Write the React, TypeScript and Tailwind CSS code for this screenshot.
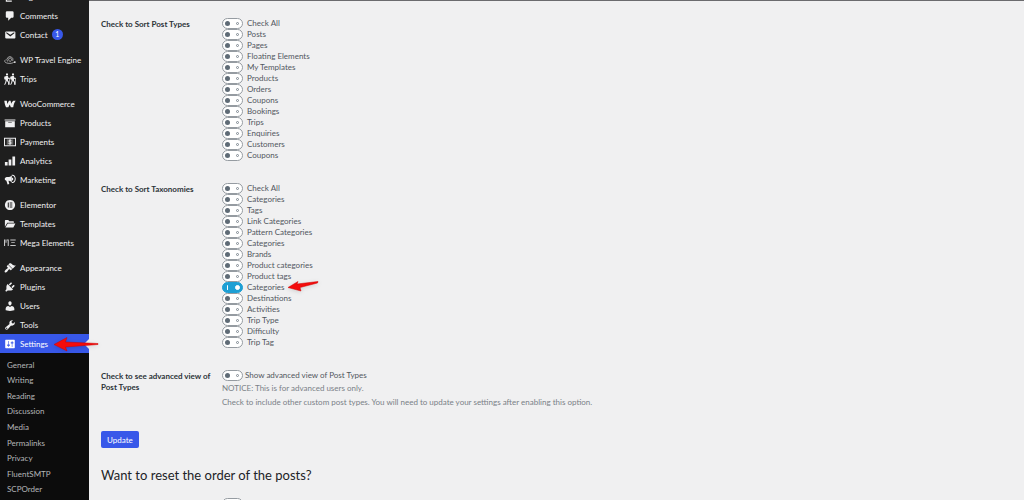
import React, { useState } from 'react';

interface MenuItem {
  name: string;
  icon: React.ReactNode;
  badge?: number;
  gap?: boolean;
  active?: boolean;
}

const Icon: React.FC<{ d?: string; children?: React.ReactNode }> = ({ d, children }) => (
  <svg viewBox="0 0 20 20" className="h-3 w-3 shrink-0" fill="currentColor" aria-hidden="true">
    {d ? <path d={d} /> : children}
  </svg>
);

const hiker = 'M5 0.5a1.8 1.8 0 1 0 .01 0zM3.6 5h2.8l1.4 3.2 1.6.8v1.4L6.8 9.6 6.6 12l1.8 3v4.6H6.8V16L4.6 13 3.4 16.6 1.6 19.8.4 19 2 15.8l.8-4.4L.4 10.6V6.2zM8.8 8h1v11.6h-1z';

const menu: MenuItem[] = [
  { name: 'Pages', icon: <Icon d="M6 15V2h10v13H6zm-1 1h8v2H3V5h2v11z" /> },
  { name: 'Comments', icon: <Icon d="M5 2h9q.82 0 1.41.59T16 4v7q0 .82-.59 1.41T14 13h-2l-5 5v-5H5q-.82 0-1.41-.59T3 11V4q0-.82.59-1.41T5 2z" /> },
  { name: 'Contact', badge: 1, icon: <Icon d="M3.87 4h13.25C18.37 4 19 4.59 19 5.79v8.42c0 1.19-.63 1.79-1.88 1.79H3.87c-1.25 0-1.88-.6-1.88-1.79V5.79c0-1.2.63-1.79 1.88-1.79zm6.62 8.6l6.74-5.53c.24-.2.43-.66.13-1.07-.29-.41-.82-.42-1.17-.17l-5.7 3.86L4.8 5.83c-.35-.25-.88-.24-1.17.17-.3.41-.11.87.13 1.07z" /> },
  {
    name: 'WP Travel Engine',
    gap: true,
    icon: (
      <Icon>
        <g fill="none" stroke="currentColor" strokeWidth="1.3" opacity="0.8">
          <path d="M6 12.5A5 5 0 1 1 14.500 11.5" />
          <path d="M8 10.300a2.500 2.500 0 1 1 4.300 0L10.200 12.800z" />
          <path d="M2.500 9.500C-1 13 3 15.800 10 15.600c3 0 5-.8 6.500-2" />
        </g>
        <circle cx="18" cy="13.500" r="1.600" />
      </Icon>
    ),
  },
  {
    name: 'Trips',
    icon: (
      <Icon>
        <path d={hiker} />
        <path d={hiker} transform="translate(10 0)" />
      </Icon>
    ),
  },
  { name: 'WooCommerce', gap: true, icon: <Icon d="M.5 4.500h4.200l.8 5.500L8.300 4.500h2.800l.8 5C12.800 7.500 14 5.700 15.500 4.500h4c-2.200 2.500-3.400 6.100-4.100 11h-4l-1.900-4.600L7.300 15.500H3.400C1.800 12 1 9 .5 4.500z" /> },
  { name: 'Products', icon: <Icon d="M19 4v2H1V4h18zM2 7h16v10H2V7zm11 3V9H7v1h6z" /> },
  {
    name: 'Payments',
    icon: (
      <Icon>
        <path fillRule="evenodd" d="M0 3h20v14H0zM1.700 4.700v10.600h16.600V4.700z" />
        <path d="M4.500 5.500h11v9h-11z" opacity="0.35" />
        <path d="M12.300 7.700c-1-1-4.300-1-4.300.7 0 2.100 4.100 1 4.100 3.300 0 1.900-3.300 1.700-4.600.6M10 5.500v9" fill="none" stroke="currentColor" strokeWidth="1.600" />
      </Icon>
    ),
  },
  { name: 'Analytics', icon: <Icon d="M1.500 11.500h4.500V17.500H1.500zM7.700 7.500h4.500v10H7.700zM14 2.500h4.500v15H14z" /> },
  {
    name: 'Marketing',
    icon: (
      <Icon>
        <path d="M13 2.500v11.500c-2-2-3.800-2.600-5.500-2.700l1.300 5.500-2.800.8-2-6.500C1.500 10.500.8 8.800 1.500 7.200 2.200 5.700 4 5.300 6.500 5.200 9 5.100 11 4.300 13 2.500z" />
        <path d="M13 2.200c3.500-1 5.700 2.300 5.700 5.900s-2.200 6.800-5.700 6" fill="none" stroke="currentColor" strokeWidth="1.700" />
        <path d="M13 5.700a2.500 2.500 0 0 1 0 5z" />
      </Icon>
    ),
  },
  { name: 'Elementor', gap: true, icon: <Icon><path fillRule="evenodd" d="M10 1.500a8.500 8.500 0 1 0 .01 0zM6.300 6H8v8H6.300zM9.500 6h4.400v1.600H9.500zM9.500 9.200h4.400v1.600H9.500zM9.500 12.400h4.400V14H9.500z" /></Icon> },
  { name: 'Templates', icon: <Icon d="M1.500 4.500c0-.6.400-1 1-1h4.500l2 2h6.500c.6 0 1 .4 1 1V8H5.500L1.500 14.500zM6.200 9H19l-3.200 6.500c-.2.400-.5.500-.8.500H2.300z" /> },
  {
    name: 'Mega Elements',
    icon: (
      <Icon>
        <path d="M0 4h1.800v11H0zM2.600 4h1.600v5.500H2.600zM5 4h3v11H6.200V5.800H5zM10.500 4h9v1.700h-9zM12 8.600h6v1.600h-6zM10.500 13.300h9V15h-9z" opacity="0.8" />
      </Icon>
    ),
  },
  { name: 'Appearance', gap: true, icon: <Icon d="M14.48 11.06L7.41 3.99l1.5-1.5c.5-.56 2.3-.47 3.51.32 1.21.8 1.43 1.28 2.91 2.1 1.18.64 2.45 1.26 4.45.85zm-.71.71L6.7 4.7 4.93 6.47c-.39.39-.39 1.02 0 1.41l1.06 1.06c.39.39.39 1.03 0 1.42-.6.6-1.43 1.11-2.21 1.69-.35.26-.7.53-1.01.84C1.43 14.23.4 16.08 1.4 17.07c.99 1 2.84-.03 4.18-1.36.31-.31.58-.66.85-1.02.57-.78 1.08-1.61 1.69-2.21.39-.39 1.02-.39 1.41 0l1.06 1.06c.39.39 1.02.39 1.41 0z" /> },
  { name: 'Plugins', icon: <Icon d="M13.11 4.36L9.87 7.6 8 5.73l3.24-3.24c.35-.34 1.05-.2 1.56.32.52.51.66 1.21.31 1.55zm-8 1.77l.91-1.12 9.01 9.01-1.19.84c-.71.71-2.63 1.16-3.82 1.16H6.14L4.9 17.26c-.59.59-1.54.59-2.12 0-.59-.58-.59-1.53 0-2.12l1.24-1.24v-3.88c0-1.13.4-3.19 1.09-3.89zm7.26 3.97l3.24-3.24c.34-.35 1.04-.21 1.55.31.52.51.66 1.21.31 1.55l-3.24 3.25z" /> },
  { name: 'Users', icon: <Icon d="M10 9.25c-2.27 0-2.73-3.44-2.73-3.44C7 4.02 7.82 2 9.97 2c2.16 0 2.98 2.02 2.71 3.81 0 0-.41 3.44-2.68 3.44zm0 2.57L12.72 10c2.39 0 4.52 2.33 4.52 4.53v2.49s-3.65 1.13-7.24 1.13c-3.65 0-7.24-1.13-7.24-1.13v-2.49c0-2.25 1.94-4.48 4.47-4.48z" /> },
  { name: 'Tools', icon: <Icon d="M16.68 9.77c-1.34 1.34-3.3 1.67-4.95.99l-5.41 6.52c-.99.99-2.59.99-3.58 0s-.99-2.59 0-3.57l6.52-5.42c-.68-1.65-.35-3.61.99-4.95 1.28-1.28 3.12-1.62 4.72-1.06l-2.89 2.89 2.82 2.82 2.86-2.87c.53 1.58.18 3.39-1.08 4.65zM3.81 16.21c.4.39 1.04.39 1.43 0 .4-.4.4-1.04 0-1.43-.39-.4-1.03-.4-1.43 0-.39.39-.39 1.03 0 1.43z" /> },
  { name: 'Settings', active: true, icon: <Icon d="M18 16V4c0-.55-.45-1-1-1H3c-.55 0-1 .45-1 1v12c0 .55.45 1 1 1h14c.55 0 1-.45 1-1zM8 11h1c.55 0 1 .45 1 1s-.45 1-1 1H8v1.5c0 .28-.22.5-.5.5s-.5-.22-.5-.5V13H6c-.55 0-1-.45-1-1s.45-1 1-1h1V5.5c0-.28.22-.5.5-.5s.5.22.5.5V11zm5-2h-1c-.55 0-1-.45-1-1s.45-1 1-1h1V5.5c0-.28.22-.5.5-.5s.5.22.5.5V7h1c.55 0 1 .45 1 1s-.45 1-1 1h-1v5.5c0 .28-.22.5-.5.5s-.5-.22-.5-.5V9z" /> },
];

const submenu = ['General', 'Writing', 'Reading', 'Discussion', 'Media', 'Permalinks', 'Privacy', 'FluentSMTP', 'SCPOrder'];

const postTypes = [
  'Check All', 'Posts', 'Pages', 'Floating Elements', 'My Templates', 'Products', 'Orders',
  'Coupons', 'Bookings', 'Trips', 'Enquiries', 'Customers', 'Coupons',
];

const taxonomies = [
  'Check All', 'Categories', 'Tags', 'Link Categories', 'Pattern Categories', 'Categories', 'Brands',
  'Product categories', 'Product tags', 'Categories', 'Destinations', 'Activities', 'Trip Type', 'Difficulty', 'Trip Tag',
];

const Arrow: React.FC<{ className: string; d: string; viewBox: string }> = ({ className, d, viewBox }) => (
  <svg viewBox={viewBox} className={`pointer-events-none absolute z-10 drop-shadow-sm ${className}`} aria-hidden="true">
    <path d={d} fill="#f40b0b" stroke="#c00" strokeWidth="0.5" />
  </svg>
);

const Toggle: React.FC<{ id: string; checked: boolean; onChange: () => void; label?: string }> = ({ id, checked, onChange, label }) => (
  <input
    id={id}
    type="checkbox"
    aria-label={label}
    checked={checked}
    onChange={onChange}
    className="relative h-[11px] w-[21px] shrink-0 appearance-none rounded-full border border-[#959ba1] bg-white before:absolute before:top-[2px] before:left-[2px] before:h-[5px] before:w-[5px] before:rounded-full before:bg-[#5f6b76] after:absolute after:top-[3px] after:right-[3px] after:h-[3px] after:w-[3px] after:rounded-full after:border after:border-[#7e8891] checked:border-[#1d9fd4] checked:bg-[#1d9fd4] checked:before:left-[4px] checked:before:w-px checked:before:bg-white checked:after:top-[2px] checked:after:right-[2px] checked:after:h-[5px] checked:after:w-[5px] checked:after:border-white checked:after:bg-white"
  />
);

const ToggleList: React.FC<{ prefix: string; items: string[]; initial: number[]; arrowAt?: number }> = ({ prefix, items, initial, arrowAt }) => {
  const [selected, setSelected] = useState<number[]>(initial);

  const toggle = (index: number) => {
    setSelected(prev => (prev.includes(index) ? prev.filter(i => i !== index) : [...prev, index]));
  };

  return (
    <div>
      {items.map((item, index) => (
        <div key={index} className="flex h-[11px] items-center">
          <Toggle id={`${prefix}-${index}`} checked={selected.includes(index)} onChange={() => toggle(index)} />
          <label htmlFor={`${prefix}-${index}`} className="relative ml-1 leading-[11px]">
            {item}
            {arrowAt === index && (
              <Arrow className="-top-[2px] left-full ml-[2px] h-3 w-8" viewBox="0 0 32 12" d="M1 7.500L11 1.500L10 4L31 1.500L30.500 3L13 7.500L14 11z" />
            )}
          </label>
        </div>
      ))}
    </div>
  );
};

const FormRow: React.FC<{ title: string; children: React.ReactNode }> = ({ title, children }) => (
  <div className="grid grid-cols-[121px_1fr] py-[11px]">
    <div className="pt-px pr-2 leading-[11px] font-bold text-[#2c3338]">{title}</div>
    <div>{children}</div>
  </div>
);

const App: React.FC = () => {
  const [advanced, setAdvanced] = useState(false);
  const [reset, setReset] = useState(false);

  return (
    <div className="flex h-screen overflow-hidden bg-[#f0f0f1] font-[Lato,sans-serif] text-[8px] text-[#50575e]">
      {/* Admin menu */}
      <nav className="w-[89px] shrink-0 bg-[#1e1e1e] text-[#f0f0f1]">
        <ul className="-mt-[13px]">
          {menu.map(item => (
            <li key={item.name} className={item.gap ? 'mt-[6px]' : ''}>
              <a
                href="#"
                className={`relative flex h-[19px] items-center gap-1 pl-1 whitespace-nowrap ${item.active ? 'bg-[#3858e9] text-white' : ''}`}
              >
                {item.icon}
                <span>{item.name}</span>
                {item.badge && (
                  <span className="flex h-[11px] w-[11px] items-center justify-center rounded-full bg-[#3858e9] text-[7px] text-white">{item.badge}</span>
                )}
                {item.active && (
                  <>
                    <span className="absolute right-0 border-y-[5px] border-r-[5px] border-y-transparent border-r-[#f0f0f1]" />
                    <Arrow className="left-[53px] h-4 w-[46px]" viewBox="0 0 46 16" d="M1 8.500L14 1.500L12.500 6L45 7.500L45 8.500L12.500 11L14 15z" />
                  </>
                )}
              </a>
            </li>
          ))}
        </ul>
        <ul className="grid h-[147px] auto-rows-fr bg-[#0c0c0c] pt-1 pb-[3px] text-[#b4b6b8]">
          {submenu.map(item => (
            <li key={item} className="flex items-center pl-[7px]">
              <a href="#" className="leading-3">{item}</a>
            </li>
          ))}
        </ul>
      </nav>

      {/* Settings form */}
      <main className="min-w-0 flex-1 border-t border-[#6b6b6e] pt-[6px] pl-3">
        <FormRow title="Check to Sort Post Types">
          <ToggleList prefix="post-type" items={postTypes} initial={[]} />
        </FormRow>
        <FormRow title="Check to Sort Taxonomies">
          <ToggleList prefix="taxonomy" items={taxonomies} initial={[9]} arrowAt={9} />
        </FormRow>
        <FormRow title="Check to see advanced view of Post Types">
          <div className="flex h-[11px] items-center">
            <Toggle id="advanced" checked={advanced} onChange={() => setAdvanced(!advanced)} />
            <label htmlFor="advanced" className="ml-[2px] leading-[11px]">Show advanced view of Post Types</label>
          </div>
          <p className="mt-[1px] leading-3 text-[#7a8087]">NOTICE: This is for advanced users only.</p>
          <p className="mt-[2px] leading-3 text-[#7a8087]">
            Check to include other custom post types. You will need to update your settings after enabling this option.
          </p>
        </FormRow>
        <button type="button" className="mt-3 h-[17px] rounded-[2px] bg-[#3858e9] px-[6px] text-white">Update</button>
        <h2 className="mt-[18px] text-[13px] leading-[18px] text-[#1d2327]">Want to reset the order of the posts?</h2>
        <div className="grid grid-cols-[121px_1fr] pt-[14px]">
          <span />
          <Toggle id="reset" label="Reset order" checked={reset} onChange={() => setReset(!reset)} />
        </div>
      </main>
    </div>
  );
};

export default App;
